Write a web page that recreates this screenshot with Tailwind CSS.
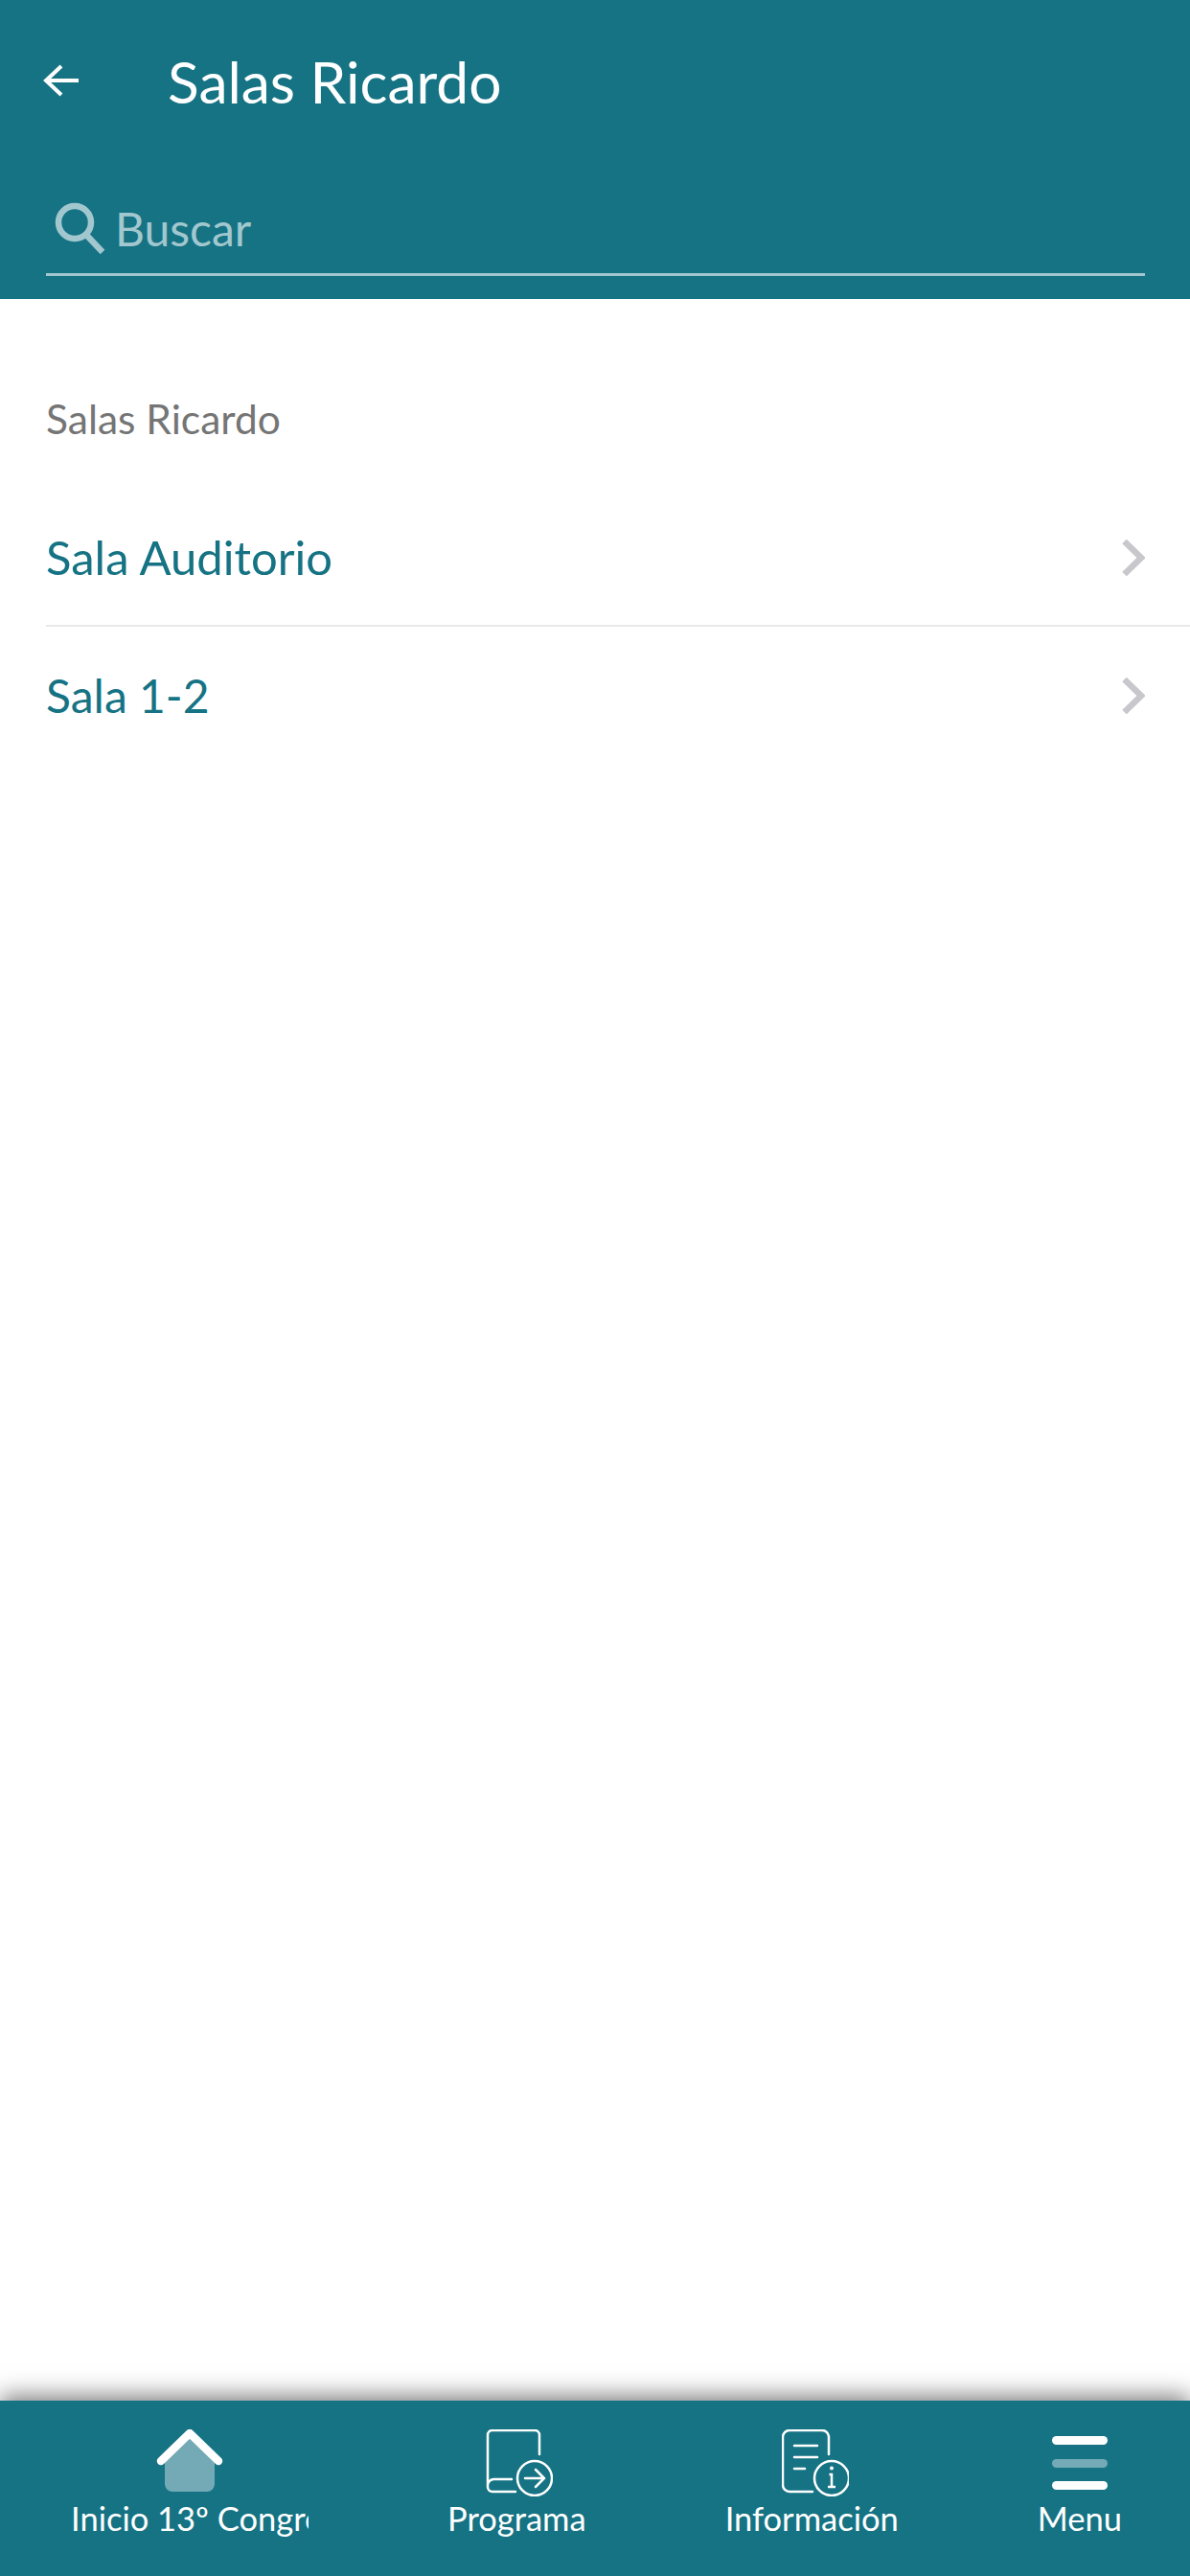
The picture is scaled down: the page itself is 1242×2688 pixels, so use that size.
<!DOCTYPE html>
<html lang="es">
<head>
<meta charset="utf-8">
<script src="https://cdn.jsdelivr.net/npm/@tailwindcss/browser@4"></script>
<title>Salas Ricardo</title>
</head>
<body class="m-0 bg-white font-['Lato',sans-serif]">
<div class="relative flex h-[2688px] w-[1242px] flex-col overflow-hidden bg-white">
  <header class="h-[312px] shrink-0 bg-[#157384] text-white">
    <div class="flex h-[170px] items-start pl-[45px] pt-[50px]">
      <svg class="mt-[17px] h-[34px] w-[38px]" viewBox="0 0 38 34" fill="none" stroke="#fff" stroke-width="4" stroke-linecap="butt" stroke-linejoin="miter"><path d="M37 17H3M19 2 3 17l16 15"/></svg>
      <h1 class="ml-[92px] text-[60.5px] leading-[70px] font-normal">Salas Ricardo</h1>
    </div>
    <div class="ml-[48px] mr-[47px] flex h-[118px] items-start border-b-[3px] border-[#a2c7ce] pt-[41px]">
      <svg class="ml-[9px] h-[54px] w-[54px]" viewBox="0 0 54 54" fill="none" stroke="#a2c7ce"><circle cx="21" cy="21" r="17" stroke-width="6.5"/><path d="M33 34 50 52" stroke-width="6.5"/></svg>
      <span class="ml-[9px] -mt-[1px] text-[48px] leading-[58px] text-[#a2c7ce]">Buscar</span>
    </div>
  </header>
  <main class="flex-1">
    <p class="ml-[48px] mt-[101px] text-[42.5px] leading-[48px] text-[#757575]">Salas Ricardo</p>
    <ul class="ml-[48px] mt-[49px]">
      <li class="flex h-[144px] items-center justify-between border-b-2 border-[#e9e9e9] pr-[47px] pt-[2px] text-[49px] text-[#157384]">
        <span>Sala Auditorio</span>
        <svg class="h-[38px] w-[24px]" viewBox="0 0 24 38" fill="none" stroke="#c7c7cc" stroke-width="6.5"><path d="M2.500 2 20 19 2.500 36"/></svg>
      </li>
      <li class="flex h-[144px] items-center justify-between pr-[47px] text-[48px] text-[#157384]">
        <span>Sala 1-2</span>
        <svg class="h-[38px] w-[24px]" viewBox="0 0 24 38" fill="none" stroke="#c7c7cc" stroke-width="6.5"><path d="M2.500 2 20 19 2.500 36"/></svg>
      </li>
    </ul>
  </main>
  <nav class="flex h-[183px] shrink-0 justify-between bg-[#157384] pl-[74px] pr-[71px] pt-[30px] text-[34.5px] leading-[40px] text-white shadow-[0_-4px_24px_rgba(0,0,0,0.55)]">
    <div class="flex w-[248px] flex-col items-center overflow-hidden">
      <svg class="h-[70px] w-[70px]" viewBox="0 0 70 70" fill="none"><path d="M9 30 35 6l26 24v27a8 8 0 0 1-8 8H17a8 8 0 0 1-8-8Z" fill="#73aab6"/><path d="M5 33 35 4l30 29" stroke="#fff" stroke-width="8.500" stroke-linecap="round" stroke-linejoin="round"/></svg>
      <span class="mt-[3px] w-[248px] whitespace-nowrap">Inicio 13º Congreso</span>
    </div>
    <div class="flex flex-col items-center">
      <svg class="h-[70px] w-[70px] translate-x-[3px]" viewBox="0 0 70 70" fill="none" stroke="#fff" stroke-width="2.500" stroke-linecap="round"><path d="M56 26V6a5 5 0 0 0-5-5H7a5 5 0 0 0-5 5v54a5 5 0 0 0 5 5h24M27 52H9a6.500 6.500 0 0 0-7 7"/><ellipse cx="51" cy="51" rx="18" ry="18"/><path d="M41 51h20M52 42l9 9-9 9"/></svg>
      <span class="mt-[3px]">Programa</span>
    </div>
    <div class="flex flex-col items-center">
      <svg class="h-[70px] w-[70px] translate-x-[4px]" viewBox="0 0 70 70" fill="none" stroke="#fff" stroke-width="2.500" stroke-linecap="round"><path d="M49 26V8a7 7 0 0 0-7-7H8a7 7 0 0 0-7 7v50a7 7 0 0 0 7 7h24M13 17h24M13 29h24M13 41h11"/><ellipse cx="52" cy="51" rx="18" ry="18"/><path d="M49.500 47H52v13M48 60h8" stroke-linecap="butt"/><circle cx="52" cy="40.500" r="2" fill="#fff" stroke="none"/></svg>
      <span class="mt-[3px]">Información</span>
    </div>
    <div class="flex flex-col items-center">
      <div class="flex h-[70px] w-[58px] flex-col justify-between py-[7px]">
        <div class="h-[9px] rounded-full bg-white"></div>
        <div class="h-[9px] rounded-full bg-[#73aab6]"></div>
        <div class="h-[9px] rounded-full bg-white"></div>
      </div>
      <span class="mt-[3px]">Menu</span>
    </div>
  </nav>
</div>
</body>
</html>
